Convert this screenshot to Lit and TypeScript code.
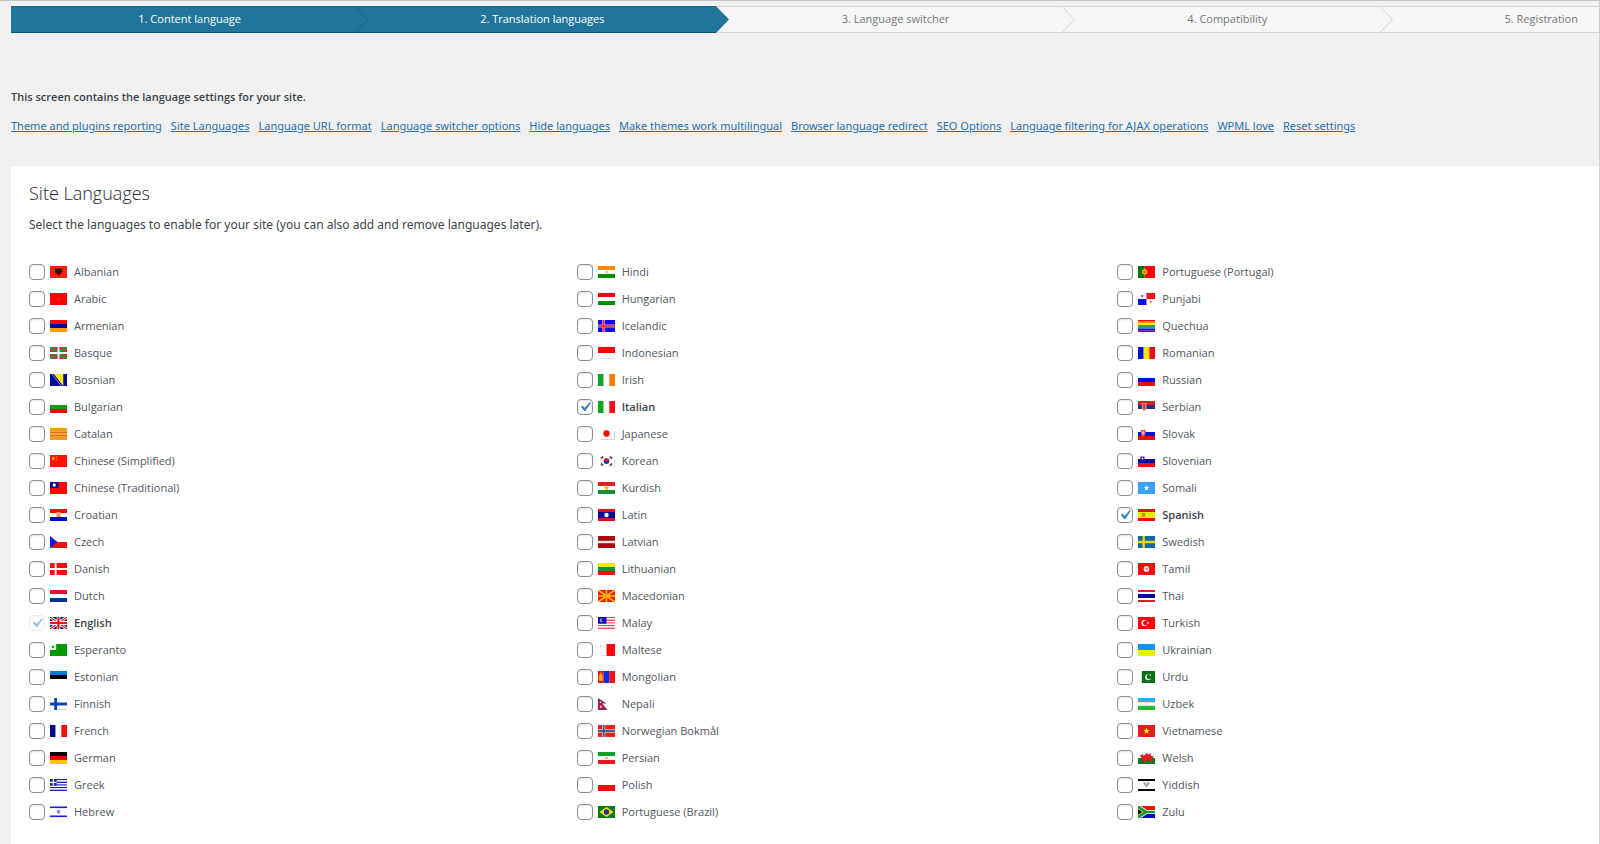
import { LitElement, html, css, svg, type SVGTemplateResult } from "lit";
import { customElement, property } from "lit/decorators.js";
import { classMap } from "lit/directives/class-map.js";

type Art = SVGTemplateResult | SVGTemplateResult[];

/* Flags share an 18 x 12 drawing area. */
const box = (x: number, y: number, w: number, h: number, fill: string) =>
  svg`<rect x=${x} y=${y} width=${w} height=${h} fill=${fill}></rect>`;
const rows = (...c: string[]) => c.map((f, i) => box(0, (12 / c.length) * i, 18, 12 / c.length, f));
const cols = (...c: string[]) => c.map((f, i) => box((18 / c.length) * i, 0, 18 / c.length, 12, f));
const dot = (cx: number, cy: number, r: number, fill: string) =>
  svg`<circle cx=${cx} cy=${cy} r=${r} fill=${fill}></circle>`;
const shape = (d: string, fill: string) => svg`<path d=${d} fill=${fill}></path>`;
const line = (d: string, stroke: string, w: number) =>
  svg`<path d=${d} stroke=${stroke} stroke-width=${w} fill="none"></path>`;
const cross = (bg: string, c: string, w: number) => [
  box(0, 0, 18, 12, bg),
  box(6 - w / 2, 0, w, 12, c),
  box(0, 6 - w / 2, 18, w, c),
];
const star = (cx: number, cy: number, r: number, fill: string) => {
  const pts = Array.from({ length: 10 }, (_, i) => {
    const a = (Math.PI / 5) * i - Math.PI / 2;
    const k = i % 2 ? r * 0.42 : r;
    return `${(cx + k * Math.cos(a)).toFixed(2)},${(cy + k * Math.sin(a)).toFixed(2)}`;
  });
  return svg`<polygon points=${pts.join(" ")} fill=${fill}></polygon>`;
};

const flags: Record<string, Art> = {
  Albanian: [box(0, 0, 18, 12, "#f3200f"), shape("M5 2.5 7.5 3 9 2 10.5 3 13 2.5 12.5 7 10.5 8 9 10 7.5 8 5.5 7z", "#3a0a05")],
  Arabic: [box(0, 0, 18, 12, "#fd0000"), star(9, 6, 2.4, "#c04400")],
  Armenian: rows("#fb0400", "#0a00a0", "#fb9a00"),
  Basque: [
    box(0, 0, 18, 12, "#e02a22"),
    line("M0 0 18 12M18 0 0 12", "#22904a", 2.6),
    line("M9 0V12M0 6H18", "#fff", 2),
  ],
  Bosnian: [box(0, 0, 18, 12, "#0a0a9c"), shape("M4 0H14V12z", "#fde90a"), line("M2 0 12 12", "#8f8fd8", 1)],
  Bulgarian: rows("#fff", "#12a012", "#ea0a0a"),
  Catalan: rows("#f0a010", "#e86a08", "#f5a512", "#e86a08", "#f5a512", "#e86a08", "#f5a512", "#e86a08", "#f0a010"),
  "Chinese (Simplified)": [box(0, 0, 18, 12, "#fd1200"), star(3.5, 3.5, 2.3, "#ffc400"), dot(7, 2, 0.7, "#ff9500"), dot(7, 5, 0.7, "#ff9500")],
  "Chinese (Traditional)": [box(0, 0, 18, 12, "#fd0505"), box(0, 0, 9, 6, "#0a0a98"), dot(4.5, 3, 1.7, "#fff")],
  Croatian: [rows("#fb0505", "#fff", "#0505d0"), box(7, 3, 4, 5, "#f47a7a"), box(8, 4, 1, 1, "#fff"), box(9, 5.5, 1, 1, "#fff")].flat(),
  Czech: [box(0, 0, 18, 6, "#fff"), box(0, 6, 18, 6, "#ee1212"), shape("M0 0 8 6 0 12z", "#1a1ae0")],
  Danish: cross("#fb0a0a", "#fff", 2),
  Dutch: rows("#fb0438", "#fff", "#0a2aa0"),
  English: [
    box(0, 0, 18, 12, "#0a0a80"),
    line("M0 0 18 12M18 0 0 12", "#fff", 3),
    line("M0 0 18 12M18 0 0 12", "#f01a1a", 1.2),
    line("M9 0V12M0 6H18", "#fff", 4),
    line("M9 0V12M0 6H18", "#f01010", 2.2),
  ],
  Esperanto: [box(0, 0, 18, 12, "#059a05"), box(0, 0, 6.5, 6, "#e9f7e9"), star(3.2, 3, 2, "#059a05")],
  Estonian: rows("#0a78e0", "#050505", "#fff"),
  Finnish: [cross("#fff", "#0a46b8", 3), line("M9 11.5H18", "#cfcfcf", 1)].flat(),
  French: cols("#0a0a86", "#fff", "#fd0a0a"),
  German: rows("#000", "#f00505", "#ffc400"),
  Greek: [
    rows("#1a1ad0", "#fff", "#1a1ad0", "#fff", "#1a1ad0", "#fff", "#1a1ad0", "#fff", "#1a1ad0"),
    box(0, 0, 7, 6.66, "#1a1ad0"),
    line("M3.5 0V6.66M0 3.3H7", "#fff", 1.2),
  ].flat(),
  Hebrew: [rows("#fff"), box(0, 0.5, 18, 1.6, "#1a1ae0"), box(0, 9.5, 18, 1.6, "#1a1ae0"), dot(9, 5.7, 2, "#8585ee")].flat(),
  Hindi: [rows("#fb8a05", "#fff", "#058a05"), dot(9, 6, 1.6, "#f7b58a")].flat(),
  Hungarian: rows("#ee0505", "#fff", "#058a05"),
  Icelandic: [cross("#0a0af0", "#c9a0ee", 3), box(5.25, 0, 1.5, 12, "#fb2020"), box(0, 5.25, 18, 1.5, "#fb2020")].flat(),
  Indonesian: [rows("#fd0505", "#fff"), line("M3 11.6H18", "#cfcfcf", 0.8)].flat(),
  Irish: cols("#05a81e", "#fff", "#fb7a05"),
  Italian: cols("#05a81e", "#fff", "#fb0a14"),
  Japanese: [box(0, 0, 18, 12, "#fff"), dot(9, 5.6, 3.3, "#fb0505"), line("M3 11.5H17.5V3", "#d2d2d2", 1)],
  Korean: [
    box(0, 0, 18, 12, "#fff"),
    shape("M6 6a3 3 0 0 1 6 0z", "#e01024"),
    shape("M6 6a3 3 0 0 0 6 0z", "#0a38b0"),
    line("M3 3.5 5.5 1.5M12.5 1.5 15 3.5M3 8.5 5.5 10.5M12.5 10.5 15 8.5", "#555", 2),
    line("M10 11.6H17.5V4", "#d8d8d8", 0.8),
  ],
  Kurdish: [rows("#e02020", "#fff", "#1a8a3a"), star(9, 6, 3, "#fbb80a")].flat(),
  Latin: [box(0, 0, 18, 12, "#e80a1a"), box(0, 3, 18, 6, "#0a0a90"), dot(9, 6, 2.3, "#fff")],
  Latvian: [box(0, 0, 18, 12, "#a80a0f"), box(0, 4.8, 18, 2.4, "#f5e6e6")],
  Lithuanian: rows("#fbe705", "#05983a", "#f0140a"),
  Macedonian: [
    box(0, 0, 18, 12, "#f41a05"),
    line("M0 0 18 12M18 0 0 12M9 0V12M0 6H18", "#fbc005", 1.7),
    dot(9, 6, 2.4, "#fba805"),
  ],
  Malay: [
    rows("#f04a5a", "#fff", "#f04a5a", "#fff", "#f04a5a", "#fff", "#f04a5a", "#fff", "#f04a5a"),
    box(0, 0, 9, 6.66, "#0a0ac8"),
    dot(4, 3.3, 1.9, "#c8c86a"),
    dot(4.8, 3.3, 1.3, "#0a0ac8"),
  ].flat(),
  Maltese: [box(0, 0, 9, 12, "#fff"), box(9, 0, 9, 12, "#fb0a0a"), dot(3, 2, 0.9, "#e5b5b5"), line("M3 11.6H9", "#cfcfcf", 0.8)],
  Mongolian: [cols("#f21212", "#0a28e8", "#f21212"), shape("M1 10V5L3 1 5 5V10z", "#fbb00a")].flat(),
  Nepali: [shape("M0 0 9 5.5H4.5L10 12H0z", "#6a2a78"), shape("M1 2 6.5 5H3L8 11H1z", "#d81438"), dot(2.6, 4.2, 0.8, "#fff"), dot(3, 8.8, 1, "#fff")],
  "Norwegian Bokmål": [cross("#ee1c1c", "#e8c6cc", 3.4), box(5.1, 0, 1.8, 12, "#285a8a"), box(0, 5.1, 18, 1.8, "#285a8a")].flat(),
  Persian: [rows("#0aa02a", "#fff", "#f0141a"), dot(9, 6, 1.3, "#f29a9a")].flat(),
  Polish: rows("#fff", "#f40a0a"),
  "Portuguese (Brazil)": [box(0, 0, 18, 12, "#057a14"), shape("M9 1 16.5 6 9 11 1.5 6z", "#f0e00a"), dot(9, 6, 2.8, "#1a2ab0")],
  "Portuguese (Portugal)": [box(0, 0, 7, 12, "#057a0a"), box(7, 0, 11, 12, "#fb0505"), dot(7, 5.8, 2.8, "#e8c00a"), dot(7, 5.8, 1.5, "#ee5a3a")],
  Punjabi: [box(0, 0, 18, 12, "#fff"), box(9, 0, 9, 6, "#fb0a0a"), box(0, 6, 9, 6, "#0a0af0"), star(4.5, 3, 1.8, "#3a3af0"), star(13.5, 8.8, 1.8, "#f05a5a")],
  Quechua: rows("#fb0a0a", "#fb9a05", "#f5ee05", "#0a9a1a", "#0a9af0", "#0a1ab0", "#7a0aa0"),
  Romanian: cols("#0a0ad0", "#fbe705", "#f40a0a"),
  Russian: rows("#fff", "#0505f2", "#f40a0a"),
  Serbian: [rows("#dd1c24", "#153a86", "#fff"), shape("M4 2H9V8L6.5 10 4 8z", "#d88a7a"), line("M6.5 3V8", "#c01a1a", 1.4)].flat(),
  Slovak: [rows("#fff", "#0a0ae0", "#f40a0a"), shape("M3 2H8V6.5L5.5 9 3 6.5z", "#f04a5a"), line("M5.5 3V7M4.2 4.6H6.8", "#fff", 0.8)].flat(),
  Slovenian: [rows("#fff", "#0a0aa0", "#f40a0a"), shape("M2.5 1.5H7V4.5L4.8 6.5 2.5 4.5z", "#2a2aa8"), dot(4.8, 3.4, 0.9, "#fff")].flat(),
  Somali: [box(0, 0, 18, 12, "#3aa0f8"), star(9, 6, 3, "#fff")],
  Spanish: [box(0, 0, 18, 12, "#f00a0a"), box(0, 3, 18, 6, "#fbe705"), box(4, 4, 3.5, 3.5, "#d8783a")],
  Swedish: cross("#0a6aa8", "#f5d80a", 2.4),
  Tamil: [box(0, 0, 18, 12, "#f40a0f"), dot(9, 6, 3, "#fbe6e6"), dot(9.3, 6, 1.4, "#f08a8a")],
  Thai: [box(0, 0, 18, 12, "#ee1428"), box(0, 2, 18, 8, "#fff"), box(0, 4, 18, 4, "#0a0aa0")],
  Turkish: [box(0, 0, 18, 12, "#f80a0a"), dot(6.6, 6, 2.9, "#fff"), dot(7.5, 6, 2.2, "#f80a0a"), star(10.6, 6, 1.4, "#fff")],
  Ukrainian: rows("#0a96f8", "#fbee05"),
  Urdu: [box(0, 0, 4, 12, "#fff"), box(4, 0, 14, 12, "#0a6e14"), dot(10.6, 6.2, 3, "#fff"), dot(11.6, 5.4, 2.5, "#0a6e14"), dot(13, 4, 0.8, "#fff")],
  Uzbek: [rows("#2ab0e8", "#fff", "#1ac02a"), box(0, 3.8, 18, 0.6, "#f08a8a"), box(0, 7.6, 18, 0.6, "#f08a8a")].flat(),
  Vietnamese: [box(0, 0, 18, 12, "#e0201a"), star(9, 6, 3.5, "#fbe80a")],
  Welsh: [
    rows("#fff", "#0a7a1e"),
    shape("M2 4 5 2 6 4 9 1 11 2.5 13 1 14 4 17 4.5 14.5 7 16 10H13.5L12 8 9 8.5 8 10.5H5.5L6 8 3 9 4 6z", "#dd1c28"),
  ].flat(),
  Yiddish: [box(0, 0, 18, 12, "#fff"), box(0, 0, 18, 2, "#050505"), box(0, 10, 18, 2, "#050505"), shape("M5 3.5H13L9 8.5z", "#9a9a9a"), dot(9, 4.8, 0.9, "#fff")],
  Zulu: [
    rows("#ee140a", "#0a0ac0"),
    shape("M0 0H3L9.5 4H18V8H9.5L3 12H0z", "#fff"),
    shape("M0 0H1.5L9 4.8H18V7.2H9L1.5 12H0z", "#0a9a3a"),
    shape("M0 2 6 6 0 10z", "#f0b80a"),
    shape("M0 3.2 4.3 6 0 8.8z", "#000"),
  ].flat(),
};

const names = Object.keys(flags);
const columns = [names.slice(0, 21), names.slice(21, 42), names.slice(42)];
const enabled = new Set(["English", "Italian", "Spanish"]);
const defaultLanguage = "English";

const links = [
  "Theme and plugins reporting",
  "Site Languages",
  "Language URL format",
  "Language switcher options",
  "Hide languages",
  "Make themes work multilingual",
  "Browser language redirect",
  "SEO Options",
  "Language filtering for AJAX operations",
  "WPML love",
  "Reset settings",
];

@customElement("setup-steps")
export class SetupSteps extends LitElement {
  @property({ type: Number }) current = 2;

  static styles = css`
    :host { display: block; }
    ol {
      display: grid;
      grid-template-columns: 357fr 361fr 345fr 318fr 206fr;
      list-style: none;
      margin: 0;
      padding: 0;
      height: 27px;
    }
    li { display: flex; min-width: 0; background: #f7f7f7; color: #72777c; }
    .label {
      flex: 1;
      box-sizing: border-box;
      border: solid #d2d2d2;
      border-width: 1px 0;
      text-align: center;
      line-height: 24px;
      white-space: nowrap;
    }
    .done .label { background: #21759b; border-color: #1b6a90; border-bottom-color: #0b5578; color: #fff; }
    li:first-child .label { padding-left: 13px; }
    li:last-child .label { text-align: right; padding-right: 21px; }
    svg { display: block; width: 13px; height: 27px; flex: none; }
  `;

  private tip(index: number) {
    const done = index < this.current;
    const last = index === this.current - 1;
    const top = done && !last ? "#1b6a90" : "#d2d2d2";
    const bottom = done && !last ? "#0b5578" : "#d2d2d2";
    return html`<svg viewBox="0 0 13 27" aria-hidden="true">
      ${done && !last ? box(0, 0, 13, 27, "#21759b") : ""}
      ${box(0, 0, 13, 1, top)}${box(0, 26, 13, 1, bottom)}
      ${last
        ? svg`<path d="M0 0 13 13.5 0 27z" fill="#21759b"></path>`
        : svg`<path d="M0 0.5 12.5 13.5 0 26.5" fill="none" stroke=${done ? "#1b6a90" : "#dfdfdf"} stroke-width="1.2"></path>`}
    </svg>`;
  }

  render() {
    const steps = ["Content language", "Translation languages", "Language switcher", "Compatibility", "Registration"];
    return html`<ol>
      ${steps.map(
        (s, i) => html`<li class=${classMap({ done: i < this.current })}>
          <span class="label">${i + 1}. ${s}</span>${i < steps.length - 1 ? this.tip(i) : ""}
        </li>`,
      )}
    </ol>`;
  }
}

@customElement("language-option")
export class LanguageOption extends LitElement {
  @property() name = "";

  static styles = css`
    :host { display: block; }
    label { display: flex; align-items: center; width: fit-content; height: 27px; color: #50575e; }
    input {
      appearance: none;
      box-sizing: border-box;
      width: 16px;
      height: 16px;
      margin: 0 5px 0 0;
      border: 1px solid #8c8f94;
      border-radius: 4px;
      background: #fff center / 19px no-repeat;
      box-shadow: inset 0 1px 2px rgba(0, 0, 0, 0.1);
    }
    input:checked {
      background-image: url("data:image/svg+xml,%3Csvg xmlns='http://www.w3.org/2000/svg' viewBox='0 0 20 20'%3E%3Cpath d='M14.83 4.89l1.34.94-5.81 8.38H9.02L5.78 9.67l1.34-1.25 2.57 2.4z' fill='%233582c4'/%3E%3C/svg%3E");
    }
    input:disabled { opacity: 0.5; border-color: #dcdcde; }
    svg { display: block; width: 17px; height: 12px; margin-right: 7px; }
    .on { color: #3c434a; font-weight: 600; }
  `;

  render() {
    const on = enabled.has(this.name);
    return html`<label>
      <input type="checkbox" .checked=${on} ?disabled=${this.name === defaultLanguage} />
      <svg viewBox="0 0 18 12" preserveAspectRatio="none" aria-hidden="true">${flags[this.name]}</svg>
      <span class=${classMap({ on })}>${this.name}</span>
    </label>`;
  }
}

@customElement("app-root")
export class AppRoot extends LitElement {
  static styles = css`
    :host {
      display: flex;
      flex-direction: column;
      box-sizing: border-box;
      min-height: 100vh;
      padding: 5px 0 0 11px;
      border-top: 1px solid #c3c4c7;
      border-right: 1px solid #d0d0d0;
      background: #f0f0f0;
      font: 11px/20px "Open Sans", "Noto Sans", sans-serif;
      color: #3c434a;
    }
    .intro { margin: 54px 0 9px; font-weight: 600; }
    nav { display: flex; flex-wrap: wrap; gap: 0 9px; font-family: "Noto Sans", sans-serif; }
    a { color: #2271b1; }
    main { flex: 1; margin-top: 30px; padding: 15px 0 19px 18px; background: #fff; }
    h1 { margin: 0; font-size: 18px; line-height: 24px; font-weight: 300; color: #23282d; }
    .hint { margin: 10px 0 23px; font-size: 12px; font-family: "Noto Sans", sans-serif; }
    .languages { display: grid; grid-template-columns: 548fr 541fr 482fr; }
    ul { list-style: none; margin: 0; padding: 0; }
  `;

  render() {
    return html`
      <setup-steps current="2"></setup-steps>
      <p class="intro">This screen contains the language settings for your site.</p>
      <nav>${links.map((l) => html`<a href="#">${l}</a>`)}</nav>
      <main>
        <h1>Site Languages</h1>
        <p class="hint">Select the languages to enable for your site (you can also add and remove languages later).</p>
        <div class="languages">
          ${columns.map(
            (c) => html`<ul>${c.map((n) => html`<li><language-option name=${n}></language-option></li>`)}</ul>`,
          )}
        </div>
      </main>
    `;
  }
}
